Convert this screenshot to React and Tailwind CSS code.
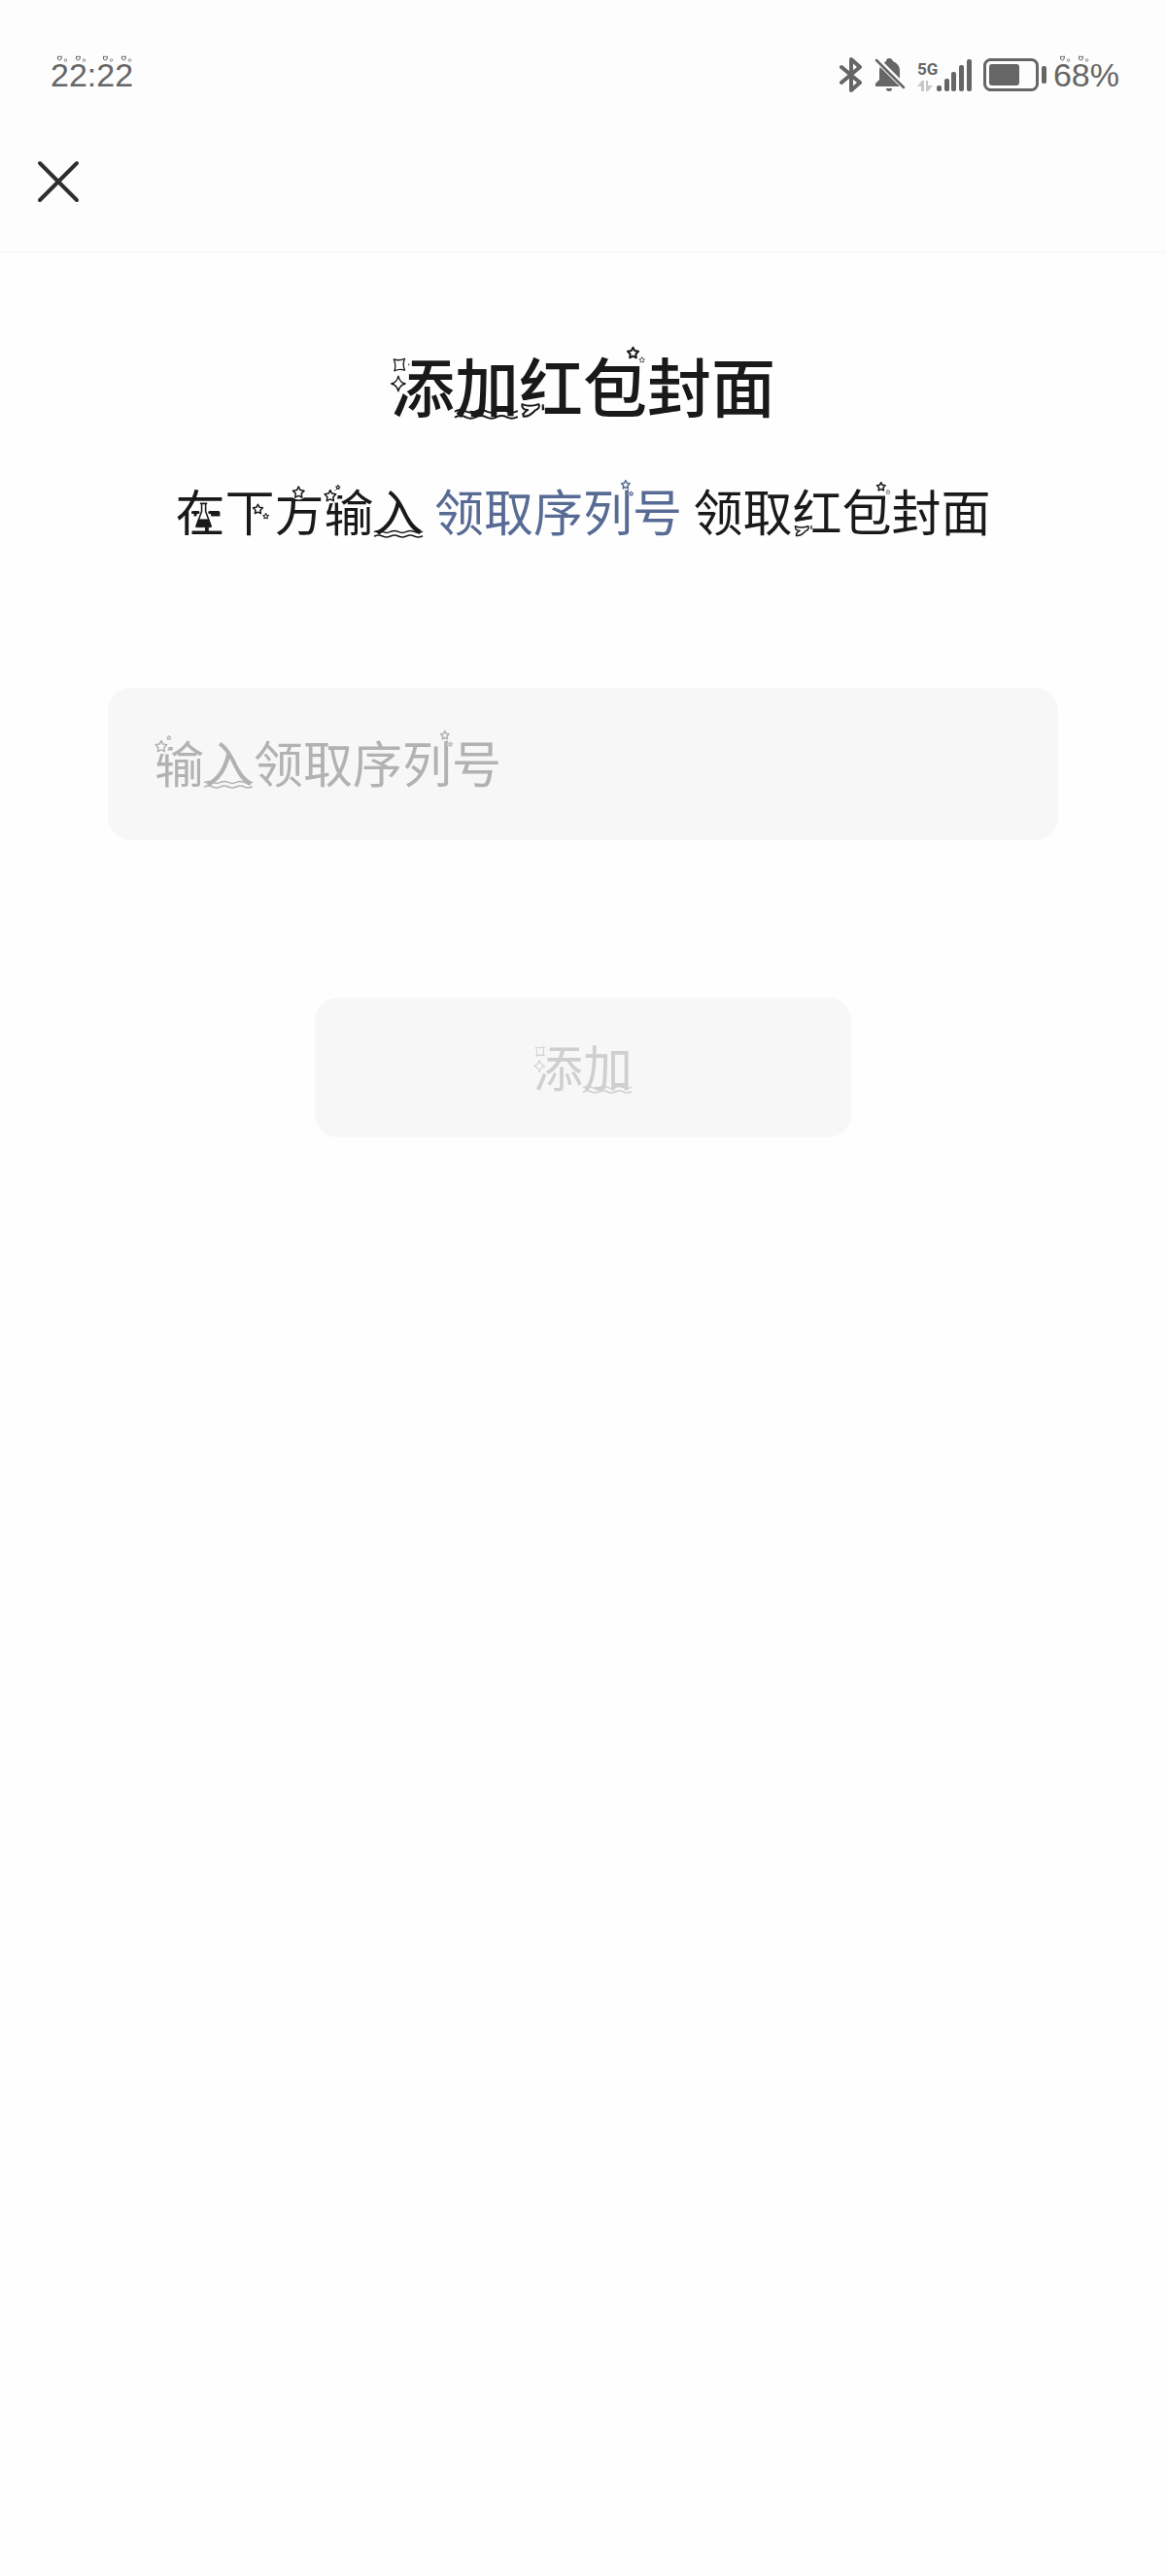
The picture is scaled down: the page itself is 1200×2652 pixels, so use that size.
const STAR =
  "M10 1.5 L12.6 6.6 L18.4 7.6 L14.3 11.8 L15.1 17.6 L10 15 L4.9 17.6 L5.7 11.8 L1.6 7.6 L7.4 6.6 Z";

// Ornaments are drawn on a 100x100 em box, one set for each decorated glyph.
// The svg's fill is the page colour, so each shape clears the strokes below it.
function Star({ x, y, size, width = 3 }) {
  return (
    <>
      <circle cx={x + size / 2} cy={y + size / 2} r={size * 0.56} stroke="none" />
      <path
        d={STAR}
        transform={`translate(${x} ${y}) scale(${size / 20})`}
        strokeWidth={(width * 20) / size}
      />
    </>
  );
}

function Waves() {
  return (
    <g strokeWidth="3" fill="none">
      <path d="M1 93 q8 -4 16 0 t16 0 t16 0 t16 0 t16 0 t16 0" />
      <path d="M1 102 q8 -4 16 0 t16 0 t16 0 t16 0 t16 0 t16 0" />
    </g>
  );
}

const ORNAMENTS = {
  添: (
    <g strokeWidth="2">
      <path d="M2 5 H28 V50 L24 64 H0 V5Z" stroke="none" />
      <path d="M5 12 Q13 15 22 11 Q18 20 22 29 Q14 26 6 30 Q9 21 5 12Z" />
      <path d="M12 38 Q14 48 23 50 Q14 52 12 62 Q10 52 1 50 Q10 48 12 38Z" />
    </g>
  ),
  加: <Waves />,
  入: <Waves />,
  红: (
    <>
      <path d="M0 76 H36 V96 H0Z" stroke="none" />
      <path
        d="M5 82 Q16 87 31 82 Q34 88 25 92 Q16 102 7 101 Q6 95 14 91 Q4 91 5 82Z"
        strokeWidth="3"
      />
    </>
  ),
  包: (
    <>
      <Star x={68} y={-8} size={20} />
      <Star x={87} y={8} size={10} width={1} />
    </>
  ),
  在: (
    <>
      <path d="M45 34 H71 V54 L80 84 H38 L45 56Z" stroke="none" />
      <path d="M36 54 H47 M70 54 H88" strokeWidth="6" />
      <path d="M52 36 H64 M54 37 V52 L43 82 H73 L62 52 V37" strokeWidth="3" />
      <path d="M48 68 H68 L73 84 H43Z" fill="currentColor" strokeWidth="1" />
    </>
  ),
  下: (
    <>
      <path d="M53 32 H92 V66 H53Z" stroke="none" />
      <Star x={56} y={36} size={23} />
      <Star x={77} y={55} size={13} width={2} />
    </>
  ),
  方: <Star x={36} y={0} size={27} />,
  输: (
    <>
      <Star x={0} y={7} size={27} />
      <Star x={24} y={-2} size={10} width={2} />
    </>
  ),
  列: (
    <>
      <Star x={76} y={-12} size={20} />
      <Star x={92} y={11} size={10} width={2} />
    </>
  ),
};

function Ornament({ char, fill }) {
  return (
    <svg
      aria-hidden="true"
      viewBox="0 0 100 100"
      className="absolute inset-0 size-full overflow-visible"
      fill={fill}
      stroke="currentColor"
      strokeLinecap="round"
      strokeLinejoin="round"
    >
      {ORNAMENTS[char]}
    </svg>
  );
}

function Fancy({ text, fill = "#fefefe" }) {
  return [...text].map((char, i) => (
    <span key={i} className="relative inline-block leading-none">
      {char}
      {ORNAMENTS[char] && <Ornament char={char} fill={fill} />}
    </span>
  ));
}

function Digits({ text }) {
  return [...text].map((char, i) => (
    <span key={i} className="relative inline-block">
      {char}
      {char !== ":" && (
        <svg
          aria-hidden="true"
          viewBox="0 0 12 7"
          className="absolute -top-1 left-1.5 h-[7px] w-3"
          fill="none"
          stroke="currentColor"
        >
          <path d="M1.5 1 L3.5 1.5 L5.5 1 L5 4 L3.5 5 L1.5 4Z" strokeWidth="1" />
          <circle cx="9.5" cy="5" r="1.3" strokeWidth=".7" />
        </svg>
      )}
    </span>
  ));
}

function BluetoothIcon() {
  return (
    <svg
      aria-label="Bluetooth"
      role="img"
      viewBox="0 0 24 38"
      className="h-[38px] w-6"
      fill="none"
      stroke="currentColor"
      strokeWidth="4"
      strokeLinejoin="round"
      strokeLinecap="round"
    >
      <path d="M2 11 L21 27 L12 35 V3 L21 11 L2 27" />
    </svg>
  );
}

function BellOffIcon() {
  return (
    <svg aria-label="Muted" role="img" viewBox="0 0 32 36" className="h-9 w-8" fill="currentColor">
      <path d="M1 30 V27 L5 23 V14 Q5 9 9 6 L12 4 Q12 1 15 1 Q18 1 19 4 Q26 7 26 14 V23 L30 27 V30Z" />
      <path d="M12 32 H18 Q18 35 15 35 Q12 35 12 32Z" />
      <path d="M0 0 L33 33" stroke="#fdfdfd" strokeWidth="6" />
      <path d="M2 3 L30 31" stroke="currentColor" strokeWidth="2.5" strokeLinecap="round" />
    </svg>
  );
}

function SignalIcon() {
  return (
    <svg aria-label="Signal" role="img" viewBox="0 0 36 34" className="h-[34px] w-9" fill="currentColor">
      <rect x="0" y="27" width="5" height="6" rx="2" />
      <rect x="8" y="20" width="5" height="13" rx="2" />
      <rect x="15" y="13" width="5" height="20" rx="2" />
      <rect x="23" y="6" width="5" height="27" rx="2" />
      <rect x="31" y="0" width="5" height="33" rx="2" />
    </svg>
  );
}

function BatteryIcon() {
  return (
    <svg aria-label="Battery" role="img" viewBox="0 0 66 34" className="h-[34px] w-[66px]" fill="currentColor">
      <rect x="1.5" y="1.5" width="54" height="31" rx="6" fill="none" stroke="currentColor" strokeWidth="3" />
      <rect x="6" y="6" width="31" height="22" rx="3" />
      <rect x="60" y="8" width="5" height="18" rx="2" />
    </svg>
  );
}

function StatusBar() {
  return (
    <div className="flex h-[154px] items-center justify-between pl-[52px] pr-12 font-['Liberation_Sans',sans-serif] text-[34px] leading-8 text-[#666]">
      <time>
        <Digits text="22:22" />
      </time>
      <div className="flex items-center">
        <div className="flex items-center gap-3">
          <BluetoothIcon />
          <BellOffIcon />
          <div className="flex items-end">
            <div className="flex w-5 flex-col">
              <span className="font-['Roboto',sans-serif] text-[17px] font-bold leading-6">5G</span>
              <svg aria-hidden="true" viewBox="0 0 16 12" className="h-3 w-4" fill="#c8c8c8">
                <path d="M5 0 H7 V11 H4 V6 H0Z M9 0 H11 V5 H16 L11 11 H9Z" />
              </svg>
            </div>
            <SignalIcon />
          </div>
          <BatteryIcon />
        </div>
        <span className="ml-1.5">
          <Digits text="68" />%
        </span>
      </div>
    </div>
  );
}

function SerialInput() {
  return (
    <div className="relative mt-[157px] w-full">
      <input
        id="serial"
        aria-label="领取序列号"
        placeholder="输入领取序列号"
        className="peer block h-[157px] w-full rounded-3xl bg-[#f7f7f7] px-12 pb-1.5 text-[51px] outline-none placeholder:text-[#b2b2b2]"
      />
      <div
        aria-hidden="true"
        className="pointer-events-none invisible absolute inset-0 flex items-center px-12 pb-1.5 text-[#b2b2b2] peer-placeholder-shown:visible"
      >
        {[..."输入领取序列号"].map((char) => (
          <span key={char} className="relative size-[51px]">
            <Ornament char={char} fill="#f7f7f7" />
          </span>
        ))}
      </div>
    </div>
  );
}

export default function App() {
  return (
    <div className="min-h-screen bg-[#fefefe] font-['Noto_Sans_CJK_SC',sans-serif] text-[#191919]">
      <header className="border-b border-[#f7f7f7] bg-[#fdfdfd]">
        <StatusBar />
        <nav className="flex h-[105px] items-start px-9 pt-2">
          <button type="button" aria-label="关闭" className="text-[#2e2e2e]">
            <svg
              viewBox="0 0 48 48"
              className="size-12"
              fill="none"
              stroke="currentColor"
              strokeWidth="4"
              strokeLinecap="round"
            >
              <path d="M5 6 L43 44 M43 6 L5 44" />
            </svg>
          </button>
        </nav>
      </header>

      <main className="flex flex-col items-center px-[111px] pt-[102px]">
        <h1 className="text-[66px] font-medium leading-none">
          <Fancy text="添加红包封面" />
        </h1>
        <p className="mt-[72px] whitespace-nowrap text-[51px] leading-none">
          <Fancy text="在下方输入" />{" "}
          <a href="#serial" className="text-[#576b95]">
            <Fancy text="领取序列号" />
          </a>{" "}
          <Fancy text="领取红包封面" />
        </p>

        <SerialInput />

        <button
          type="button"
          disabled
          className="mt-[162px] h-36 w-[552px] rounded-3xl bg-[#f7f7f7] pb-1 text-[51px] text-[#cfcfcf]"
        >
          <Fancy text="添加" fill="#f7f7f7" />
        </button>
      </main>
    </div>
  );
}
